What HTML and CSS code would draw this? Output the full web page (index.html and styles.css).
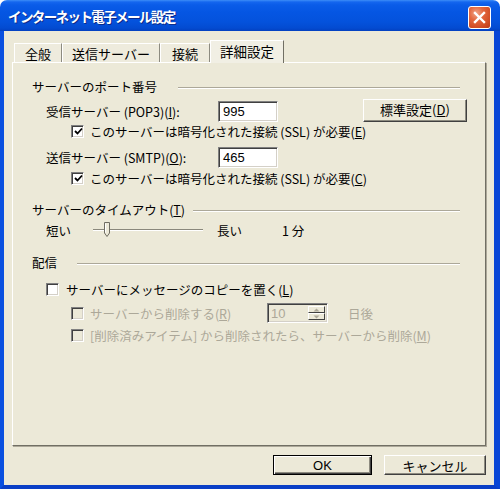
FILE: index.html
```html
<!DOCTYPE html>
<html lang="ja">
<head>
<meta charset="utf-8">
<link rel="stylesheet" href="styles.css">
</head>
<body>
<div class="window">
  <div class="titlebar">
    <span class="title">インターネット電子メール設定</span>
    <div class="close">
      <svg width="13" height="13" viewBox="0 0 13 13"><path d="M2 2 L11 11 M11 2 L2 11" stroke="#fff" stroke-width="2.4" stroke-linecap="square"/></svg>
    </div>
  </div>
  <div class="client">
    <div class="tabs">
      <div class="tab tab-w48">全般</div>
      <div class="tab tab-w98">送信サーバー</div>
      <div class="tab tab-w50">接続</div>
      <div class="tab tab-active tab-w74">詳細設定</div>
    </div>
    <div class="panel">
      <div class="group g1">
        <span class="glabel gl1">サーバーのポート番号</span><span class="sep"></span>
      </div>
      <div class="row r-pop">
        <span class="flabel">受信サーバー (POP3)(<u>I</u>):</span>
        <div class="edit">995</div>
        <div class="btn btn-default-set">標準設定(<u>D</u>)</div>
      </div>
      <div class="row r-chk1 lvl2">
        <span class="cb"><svg width="9" height="9" viewBox="0 0 9 9"><path d="M1 4 L3.5 6.5 L8 1.5" fill="none" stroke="#000" stroke-width="1.8"/></svg></span>
        <span class="ctext">このサーバーは暗号化された接続 (SSL) が必要(<u>E</u>)</span>
      </div>
      <div class="row r-smtp">
        <span class="flabel">送信サーバー (SMTP)(<u>O</u>):</span>
        <div class="edit">465</div>
      </div>
      <div class="row r-chk2 lvl2">
        <span class="cb"><svg width="9" height="9" viewBox="0 0 9 9"><path d="M1 4 L3.5 6.5 L8 1.5" fill="none" stroke="#000" stroke-width="1.8"/></svg></span>
        <span class="ctext">このサーバーは暗号化された接続 (SSL) が必要(<u>C</u>)</span>
      </div>
      <div class="group g2">
        <span class="glabel gl2">サーバーのタイムアウト(<u>T</u>)</span><span class="sep"></span>
      </div>
      <div class="row r-slider">
        <span class="slabel">短い</span>
        <svg class="slider" width="112" height="18" viewBox="0 0 112 18">
          <line x1="0" y1="8.5" x2="110" y2="8.5" stroke="#8a887c" stroke-width="1"/>
          <line x1="0" y1="9.5" x2="110" y2="9.5" stroke="#ffffff" stroke-width="1"/>
          <path d="M11.5 1.5 H16.5 V12 L14 15.5 L11.5 12 Z" fill="#ECE9D8" stroke="#6f6d62" stroke-width="1"/>
          <line x1="12.5" y1="2.5" x2="12.5" y2="11.5" stroke="#fff"/>
        </svg>
        <span class="slabel long">長い</span>
        <span class="minutes">1 分</span>
      </div>
      <div class="group g3">
        <span class="glabel gl3">配信</span><span class="sep"></span>
      </div>
      <div class="row r-chk3 lvl1">
        <span class="cb"></span>
        <span class="ctext ctext-wide">サーバーにメッセージのコピーを置く(<u>L</u>)</span>
      </div>
      <div class="row r-chk4 lvl2">
        <span class="cb cb-dis"></span>
        <span class="ctext ctext-dis ctext-fixed">サーバーから削除する(<u>R</u>)</span>
        <div class="spin">
          <span class="spin-val">10</span>
          <span class="spin-btns">
            <span class="spin-b"><svg width="7" height="4" viewBox="0 0 7 4"><path d="M0.5 3.5 L3.5 0.5 L6.5 3.5 Z" fill="#ACA899"/></svg></span>
            <span class="spin-b"><svg width="7" height="4" viewBox="0 0 7 4"><path d="M0.5 0.5 L3.5 3.5 L6.5 0.5 Z" fill="#ACA899"/></svg></span>
          </span>
        </div>
        <span class="days">日後</span>
      </div>
      <div class="row r-chk5 lvl2">
        <span class="cb cb-dis"></span>
        <span class="ctext ctext-dis">[削除済みアイテム] から削除されたら、サーバーから削除(<u>M</u>)</span>
      </div>
    </div>
    <div class="buttons">
      <div class="btn btn-ok">OK</div>
      <div class="btn btn-cancel">キャンセル</div>
    </div>
  </div>
</div>
</body>
</html>
```

FILE: styles.css
```css
* { box-sizing: border-box; }
html, body { margin: 0; padding: 0; background: #ffffff; }
body {
  font-family: "Noto Sans CJK JP", sans-serif;
  font-size: 12.5px;
  color: #000;
}
u { text-decoration: underline; text-underline-offset: 1px; }

.window {
  width: 500px;
  height: 489px;
  display: flex;
  flex-direction: column;
}

.titlebar {
  height: 31px;
  flex: none;
  display: flex;
  align-items: center;
  padding-left: 8px;
  border-radius: 7px 7px 0 0;
  background: linear-gradient(to bottom, #3d8df7 0px, #1466ef 2px, #0a5ce8 5px, #0556e3 12px, #0452dc 22px, #034bd1 28px, #0340c0 31px);
  position: relative;
}
.title {
  color: #fff;
  font-weight: bold;
  font-size: 13.5px;
  letter-spacing: -1.6px;
  text-shadow: 1px 1px 0 #0b2b8a;
  margin-top: 1px;
  white-space: nowrap;
}
.close {
  position: absolute;
  right: 9px;
  top: 6px;
  width: 23px;
  height: 23px;
  border: 1px solid #fff;
  border-radius: 3px;
  background: radial-gradient(circle at 35% 30%, #f0a58a 0%, #e4683f 35%, #cf4a22 75%, #b8391a 100%);
  display: flex;
  align-items: center;
  justify-content: center;
}

.client {
  flex: 1;
  background: #ECE9D8;
  border-left: 4px solid #0a50e0;
  border-right: 6px solid #0846d6;
  border-bottom: 4px solid #0a3fc6;
  padding: 9px 8px 0 8px;
  display: flex;
  flex-direction: column;
}

.tabs {
  height: 22px;
  display: flex;
  align-items: flex-end;
  padding-left: 2px;
  position: relative;
  z-index: 1;
}
.tab {
  height: 19px;
  font-size: 13px;
  display: flex;
  align-items: center;
  justify-content: center;
  background: #EEEBDD;
  border-top: 1px solid #fff;
  border-left: 1px solid #fff;
  border-right: 1px solid #8d8b80;
  padding-top: 1px;
  white-space: nowrap;
}
.tab-w48 { width: 48px; }
.tab-w98 { width: 98px; }
.tab-w50 { width: 50px; }
.tab-w74 { width: 74px; }
.tab-active {
  height: 23px;
  margin-bottom: -1px;
  background: #F1EFE4;
  font-size: 13.5px;
  padding-top: 0;
  padding-bottom: 3px;
  border-right: 1px solid #716F64;
}

.panel {
  height: 384px;
  flex: none;
  border-top: 1px solid #fff;
  border-left: 1px solid #fff;
  border-right: 1px solid #716F64;
  border-bottom: 1px solid #716F64;
  box-shadow: 1px 1px 0 #ACA899;
  padding: 13px 25px 0 19px;
  display: flex;
  flex-direction: column;
}

.group {
  height: 20px;
  display: flex;
  align-items: center;
}
.glabel { flex: none; white-space: nowrap; }
.gl1 { width: 146px; }
.gl2 { width: 161px; }
.gl3 { width: 45px; }
.sep {
  flex: 1;
  height: 2px;
  border-top: 1px solid #ACA899;
  border-bottom: 1px solid #fff;
  margin-top: 3px;
}
.g2 { margin-top: 13px; }
.g3 { margin-top: 12px; }

.row {
  display: flex;
  align-items: center;
  padding-left: 14px;
  white-space: nowrap;
}
.row > * { flex: none; }
.lvl1 { padding-left: 14px; }
.lvl2 { padding-left: 39px; }

.r-pop { height: 24px; margin-top: 3px; }
.r-chk1 { height: 16px; }
.r-smtp { height: 24px; margin-top: 6px; }
.r-chk2 { height: 16px; margin-top: 1px; }
.r-slider { height: 20px; margin-top: 1px; }
.r-chk3 { height: 16px; margin-top: 9px; }
.r-chk4 { height: 20px; margin-top: 6px; }
.r-chk5 { height: 16px; margin-top: 4px; }

.flabel { width: 172px; }
.edit {
  width: 60px;
  height: 21px;
  background: #fff;
  border-top: 1px solid #808080;
  border-left: 1px solid #808080;
  border-right: 1px solid #fff;
  border-bottom: 1px solid #fff;
  box-shadow: inset 1px 1px 0 #404040, inset -1px -1px 0 #D4D0C8;
  font-family: "Liberation Sans", sans-serif;
  font-size: 13px;
  padding: 2px 0 0 4px;
  line-height: 16px;
}

.btn {
  display: flex;
  align-items: center;
  justify-content: center;
  background: #ECE9D8;
  border-top: 1px solid #fff;
  border-left: 1px solid #fff;
  border-right: 1px solid #404040;
  border-bottom: 1px solid #404040;
  box-shadow: inset -1px -1px 0 #8d8b80;
  white-space: nowrap;
}
.btn-default-set {
  width: 104px;
  height: 23px;
  margin-left: 85px;
  margin-top: -2px;
  font-size: 13px;
  padding-bottom: 1px;
}

.cb {
  width: 13px;
  height: 13px;
  background: #fff;
  border-top: 1px solid #808080;
  border-left: 1px solid #808080;
  border-right: 1px solid #fff;
  border-bottom: 1px solid #fff;
  box-shadow: inset 1px 1px 0 #404040, inset -1px -1px 0 #D4D0C8;
  display: flex;
  align-items: center;
  justify-content: center;
  padding: 1px 0 0 1px;
}
.cb-dis { background: #ECE9D8; }
.ctext { margin-left: 6px; }
.ctext-wide { margin-left: 7px; }
.ctext-dis { color: #ACA899; }
.ctext-fixed { width: 177px; }

.slabel { width: 47px; }
.long { margin-left: 12px; width: 65px; }

.spin {
  display: flex;
  width: 61px;
  height: 20px;
  border-top: 1px solid #808080;
  border-left: 1px solid #808080;
  border-right: 1px solid #fff;
  border-bottom: 1px solid #fff;
  box-shadow: inset 1px 1px 0 #404040, inset -1px -1px 0 #D4D0C8;
  padding: 2px;
  align-items: stretch;
}
.spin-val {
  flex: 1;
  color: #ACA899;
  font-family: "Liberation Sans", sans-serif;
  font-size: 13px;
  line-height: 16px;
  padding-left: 1px;
}
.spin-btns {
  width: 17px;
  display: flex;
  flex-direction: column;
}
.spin-b {
  flex: 1;
  display: flex;
  align-items: center;
  justify-content: center;
  background: #ECE9D8;
  border-top: 1px solid #fff;
  border-left: 1px solid #fff;
  border-right: 1px solid #404040;
  border-bottom: 1px solid #404040;
}
.days { margin-left: 20px; color: #ACA899; }

.buttons {
  margin-top: 9px;
  display: flex;
  justify-content: flex-end;
  gap: 12px;
}
.btn-ok {
  width: 99px;
  height: 20px;
  font-family: "Liberation Sans", sans-serif;
  font-size: 13px;
  border: 1px solid #000;
  box-shadow: inset 1px 1px 0 #fff, inset -1px -1px 0 #404040, inset -2px -2px 0 #8d8b80;
}
.btn-cancel {
  width: 102px;
  height: 20px;
  font-size: 13px;
}
```
